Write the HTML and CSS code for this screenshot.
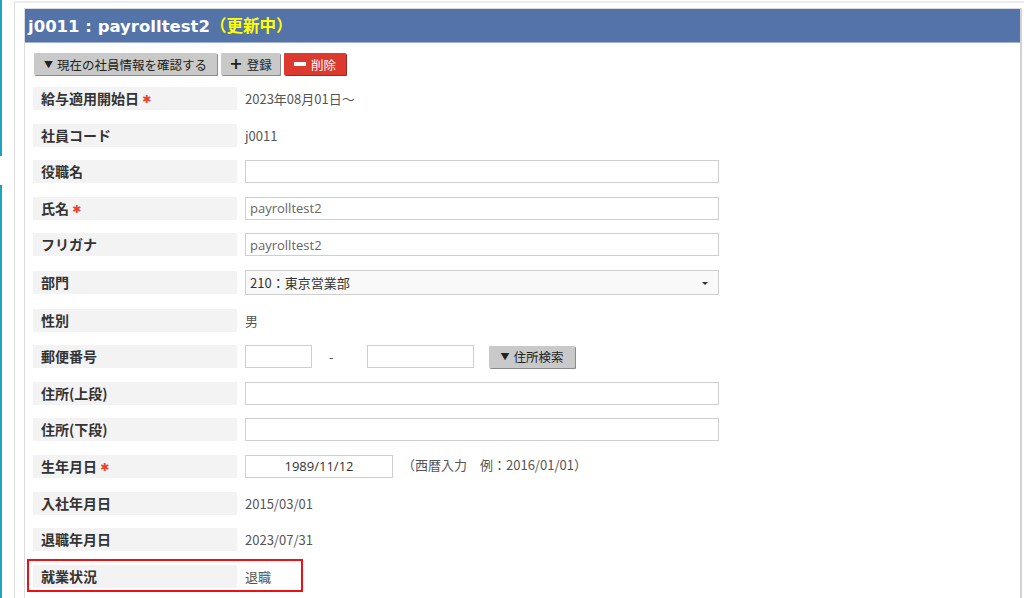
FILE: index.html
```html
<!DOCTYPE html>
<html lang="ja">
<head>
<meta charset="utf-8">
<link rel="stylesheet" href="styles.css">
</head>
<body>
<div class="shell">
  <div class="edge"><div class="seg1"></div><div class="gapseg"></div><div class="seg2"></div></div>
  <div class="content">
    <section class="panel">
      <h1 class="head">j0011 : payrolltest2<span class="status">（更新中）</span></h1>
      <div class="body">
        <div class="toolbar">
          <button class="btn gray w1"><span class="tri">▼</span>現在の社員情報を確認する</button>
          <button class="btn gray w2"><span class="plus">+</span>登録</button>
          <button class="btn red w3"><span class="minus"></span>削除</button>
        </div>
        <div class="form">
          <div class="row"><div class="lbl">給与適用開始日<span class="req">✱</span></div><div class="val">2023年08月01日～</div></div>
          <div class="row"><div class="lbl">社員コード</div><div class="val">j0011</div></div>
          <div class="row"><div class="lbl">役職名</div><div class="ctl"><input class="txt wide" type="text" value=""></div></div>
          <div class="row"><div class="lbl">氏名<span class="req">✱</span></div><div class="ctl"><input class="txt wide" type="text" value="payrolltest2"></div></div>
          <div class="row"><div class="lbl">フリガナ</div><div class="ctl"><input class="txt wide" type="text" value="payrolltest2"></div></div>
          <div class="row tall"><div class="lbl">部門</div><div class="ctl"><div class="select">210：東京営業部<span class="caret"></span></div></div></div>
          <div class="row"><div class="lbl">性別</div><div class="val">男</div></div>
          <div class="row"><div class="lbl">郵便番号</div><div class="ctl zip"><input class="txt z1" type="text" value=""><span class="dash">-</span><input class="txt z2" type="text" value=""><button class="btn gray w4"><span class="tri">▼</span>住所検索</button></div></div>
          <div class="row"><div class="lbl">住所(上段)</div><div class="ctl"><input class="txt wide" type="text" value=""></div></div>
          <div class="row"><div class="lbl">住所(下段)</div><div class="ctl"><input class="txt wide" type="text" value=""></div></div>
          <div class="row"><div class="lbl">生年月日<span class="req">✱</span></div><div class="ctl date"><input class="txt d1" type="text" value="1989/11/12"><span class="hint">（西暦入力　例：2016/01/01）</span></div></div>
          <div class="row"><div class="lbl">入社年月日</div><div class="val">2015/03/01</div></div>
          <div class="row"><div class="lbl">退職年月日</div><div class="val">2023/07/31</div></div>
          <div class="row mark"><div class="lbl">就業状況</div><div class="val">退職</div></div>
        </div>
      </div>
    </section>
  </div>
</div>
</body>
</html>
```
FILE: styles.css
```css
* { box-sizing: border-box; }
html, body { margin: 0; padding: 0; background: #fff; }
body {
  font-family: "Noto Sans CJK JP", "Open Sans", sans-serif;
  color: #333;
  overflow: hidden;
}
.shell { display: flex; height: 598px; overflow: hidden; }
.edge { width: 14px; flex: none; display: flex; flex-direction: column; }
.seg1 { width: 2px; height: 156px; background: #1fa3bd; }
.gapseg { height: 29px; }
.seg2 { width: 2px; flex: 1; background: #1fa3bd; }
.content {
  flex: 1;
  border-left: 1px solid #dedede;
  margin-top: 1px;
  border-top: 2px solid #ececec;
  padding: 5px 2px 0 9px;
}
.panel {
  height: 100%;
  border-left: 1px solid #dcdcdc;
  border-top: 1px solid #dcdcdc;
  border-right: 2px solid #d2d2d2;
}
.head {
  margin: 0;
  height: 34px;
  line-height: 33px;
  background: #5373a9;
  color: #fff;
  font-family: "DejaVu Sans", "Noto Sans CJK JP", sans-serif;
  font-weight: bold;
  font-size: 16.5px;
  padding-left: 3px;
  border-bottom: 1px solid #9fb2d2;
}
.status { color: #ffff00; font-family: "Noto Sans CJK JP", sans-serif; font-size: 16.5px; }
.body { padding: 10px 0 0 8px; }
.toolbar { display: flex; gap: 4px; margin-left: 1px; height: 23px; margin-bottom: 11px; }
.btn {
  height: 22px;
  border: none;
  border-radius: 1px;
  font-family: "Noto Sans CJK JP", sans-serif;
  font-size: 12.5px;
  padding: 0;
  display: flex;
  align-items: center;
  justify-content: center;
  gap: 4px;
  cursor: pointer;
}
.gray { background: #c9c9c9; color: #222; box-shadow: 1px 1px 0 #8a8a8a; }
.red { background: #dc3a2e; color: #fff; box-shadow: 1px 1px 0 #9a2a22; }
.w1 { width: 183px; }
.w2 { width: 59px; }
.w3 { width: 62px; }
.w4 { width: 86px; margin-left: 15px; }
.tri { font-size: 9px; }
.plus { font-weight: bold; font-size: 16px; font-family: "DejaVu Sans", sans-serif; line-height: 1; }
.minus { width: 12px; height: 4px; background: #fff; display: inline-block; margin-right: 1px; }
.form { display: flex; flex-direction: column; gap: 13.6px; }
.row { display: grid; grid-template-columns: 204px 1fr; column-gap: 8px; align-items: center; min-height: 23px; }
.lbl {
  background: #f3f3f3;
  height: 23px;
  line-height: 23px;
  padding-left: 8px;
  font-weight: bold;
  font-size: 14px;
  color: #333;
}
.req { color: #e8432f; font-weight: normal; margin-left: 3px; font-size: 11px; font-family: "DejaVu Sans", sans-serif; vertical-align: 1px; }
.val { font-size: 13px; color: #555; padding-left: 0; }
.ctl { display: flex; align-items: center; }
.txt {
  height: 23px;
  border: 1px solid #cfcfcf;
  font-family: "Open Sans", "Noto Sans CJK JP", sans-serif;
  font-size: 13px;
  color: #666;
  padding: 0 4px;
  background: #fff;
  outline: none;
}
.wide { width: 474px; }
.select {
  width: 474px;
  height: 25px;
  line-height: 23px;
  border: 1px solid #cfcfcf;
  background: #f9f9f9;
  font-size: 13px;
  color: #333;
  padding-left: 4px;
  position: relative;
}
.caret {
  position: absolute;
  right: 10px;
  top: 11px;
  border-left: 3px solid transparent;
  border-right: 3px solid transparent;
  border-top: 3px solid #333;
}
.z1 { width: 67px; }
.dash { width: 55px; padding-left: 17px; font-size: 13px; color: #555; }
.z2 { width: 107px; }
.d1 { width: 148px; text-align: center; color: #333; }
.hint { font-size: 13px; color: #555; margin-left: 9px; position: relative; top: -2px; }
.row.mark {
  margin-left: -6px;
  width: 276px;
  border: 2px solid #ee1111;
  padding: 4px 0 2px 4px;
  margin-top: -6px;
}
```
